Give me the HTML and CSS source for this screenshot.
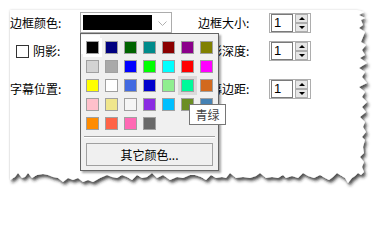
FILE: index.html
```html
<!DOCTYPE html>
<html lang="zh-CN">
<head>
<meta charset="utf-8">
<title>字幕设置</title>
<link rel="stylesheet" href="styles.css">
</head>
<body>
<div class="page">
  <svg class="paper" width="386" height="201" viewBox="0 0 386 201" aria-hidden="true">
    <defs>
      <filter id="torn" x="-10%" y="-10%" width="120%" height="130%">
        <feDropShadow dx="0" dy="0" stdDeviation="0.8" flood-color="#000" flood-opacity="0.18" result="s1"/>
        <feDropShadow dx="2" dy="3" stdDeviation="1.6" flood-color="#222" flood-opacity="0.75"/>
      </filter>
    </defs>
    <polygon filter="url(#torn)" fill="#fff" points="10,10 357,10 364,12 359,15 365,18 361,20 363,25 359,28 365,32 363,37 361,42 366,45 362,50 365,55 360,58 367,63 359,68 365,72 362,77 367,83 359,87 365,92 362,97 367,102 362,107 366,112 360,117 365,122 363,127 366,132 362,137 365,140 363,147 364,153 360,157 364,162 362,167 364,172 361,175 358,173 355,176 352,178 348,183 345,178 340,175 337,173 333,177 329,180 325,178 320,175 314,178 308,176 303,173 298,178 292,176 286,178 283,175 278,178 272,177 266,178 260,173 256,176 250,178 243,177 236,178 230,173 226,178 222,177 216,178 211,175 206,180 201,177 195,175 190,175 183,178 177,177 170,180 163,175 157,178 152,173 147,177 142,178 137,175 132,180 127,177 122,175 117,178 112,177 107,175 100,178 93,182 88,180 83,182 78,178 73,180 68,178 63,182 58,178 53,177 48,175 43,174 37,175 32,178 28,173 25,177 22,178 18,173 15,177 10,180"/>
  </svg>

  <div class="form">
    <div class="row">
      <div class="cell-left">
        <span class="label">边框颜色:</span>
        <div class="combo">
          <div class="combo-value"></div>
          <div class="combo-arrow">
            <svg width="9" height="5" viewBox="0 0 9 5"><polyline points="0.5,0.5 4.5,4.5 8.5,0.5" fill="none" stroke="#b0b0b0" stroke-width="1"/></svg>
          </div>
        </div>
      </div>
      <div class="cell-right">
        <span class="label label-right">边框大小:</span>
        <div class="spin">
          <div class="spin-input">1</div>
          <div class="spin-buttons">
            <div class="spin-btn"><span class="tri-up"></span></div>
            <div class="spin-btn"><span class="tri-down"></span></div>
          </div>
        </div>
      </div>
    </div>

    <div class="row row-2">
      <div class="cell-left">
        <span class="checkbox"></span>
        <span class="label">阴影:</span>
      </div>
      <div class="cell-right">
        <span class="label label-right">阴影深度:</span>
        <div class="spin">
          <div class="spin-input">1</div>
          <div class="spin-buttons">
            <div class="spin-btn"><span class="tri-up"></span></div>
            <div class="spin-btn"><span class="tri-down"></span></div>
          </div>
        </div>
      </div>
    </div>

    <div class="row row-3">
      <div class="cell-left">
        <span class="label">字幕位置:</span>
      </div>
      <div class="cell-right">
        <span class="label label-right">字幕边距:</span>
        <div class="spin">
          <div class="spin-input">1</div>
          <div class="spin-buttons">
            <div class="spin-btn"><span class="tri-up"></span></div>
            <div class="spin-btn"><span class="tri-down"></span></div>
          </div>
        </div>
      </div>
    </div>
  </div>

  <div class="popup">
    <div class="swatches">
      <div class="cell selected"><span class="sw" style="background:#000000"></span></div>
      <div class="cell"><span class="sw" style="background:#000080"></span></div>
      <div class="cell"><span class="sw" style="background:#006400"></span></div>
      <div class="cell"><span class="sw" style="background:#008b8b"></span></div>
      <div class="cell"><span class="sw" style="background:#8b0000"></span></div>
      <div class="cell"><span class="sw" style="background:#8b008b"></span></div>
      <div class="cell"><span class="sw" style="background:#808000"></span></div>

      <div class="cell"><span class="sw" style="background:#d3d3d3"></span></div>
      <div class="cell"><span class="sw" style="background:#a9a9a9"></span></div>
      <div class="cell"><span class="sw" style="background:#0000ff"></span></div>
      <div class="cell"><span class="sw" style="background:#00ff00"></span></div>
      <div class="cell"><span class="sw" style="background:#00ffff"></span></div>
      <div class="cell"><span class="sw" style="background:#ff0000"></span></div>
      <div class="cell"><span class="sw" style="background:#ff00ff"></span></div>

      <div class="cell"><span class="sw" style="background:#ffff00"></span></div>
      <div class="cell"><span class="sw" style="background:#ffffff"></span></div>
      <div class="cell"><span class="sw" style="background:#4169e1"></span></div>
      <div class="cell"><span class="sw" style="background:#0000cd"></span></div>
      <div class="cell"><span class="sw" style="background:#90ee90"></span></div>
      <div class="cell hover"><span class="sw" style="background:#00fa9a"></span></div>
      <div class="cell"><span class="sw" style="background:#d2691e"></span></div>

      <div class="cell"><span class="sw" style="background:#ffc0cb"></span></div>
      <div class="cell"><span class="sw" style="background:#f0e68c"></span></div>
      <div class="cell"><span class="sw" style="background:#f5f5f5"></span></div>
      <div class="cell"><span class="sw" style="background:#8a2be2"></span></div>
      <div class="cell"><span class="sw" style="background:#00bfff"></span></div>
      <div class="cell"><span class="sw" style="background:#6b8e23"></span></div>
      <div class="cell"><span class="sw" style="background:#4682b4"></span></div>

      <div class="cell"><span class="sw" style="background:#ff8c00"></span></div>
      <div class="cell"><span class="sw" style="background:#ff6347"></span></div>
      <div class="cell"><span class="sw" style="background:#ff69b4"></span></div>
      <div class="cell"><span class="sw" style="background:#696969"></span></div>
    </div>
    <div class="separator"></div>
    <div class="more-btn">其它颜色...</div>
  </div>

  <div class="tooltip">青绿</div>
</div>
</body>
</html>
```

FILE: styles.css
```css
html, body {
  margin: 0;
  padding: 0;
  background: #ffffff;
}

.page {
  position: relative;
  width: 386px;
  height: 201px;
  overflow: hidden;
  background: #ffffff;
  font-family: "Noto Sans CJK SC", "Microsoft YaHei", sans-serif;
  font-size: 12px;
  color: #000;
}

.paper {
  position: absolute;
  left: 0;
  top: 0;
}

.form {
  position: relative;
  padding: 12px 0 0 10px;
}

.row {
  display: flex;
  align-items: center;
  height: 22px;
}

.row-2 {
  margin-top: 6px;
}

.row-3 {
  margin-top: 16px;
}

.cell-left {
  display: flex;
  align-items: center;
  width: 188px;
}

.cell-right {
  display: flex;
  align-items: center;
}

.label {
  line-height: 14px;
  white-space: nowrap;
}

.cell-left > .label:first-child {
  width: 70px;
}

.label-right {
  width: 71px;
}

/* combo box */
.combo {
  box-sizing: border-box;
  width: 92px;
  height: 21px;
  margin-top: -1px;
  border: 1px solid #acacac;
  background: #fff;
  padding: 2px;
  display: flex;
}

.combo-value {
  width: 69px;
  height: 15px;
  background: #000;
}

.combo-arrow {
  flex: 1;
  display: flex;
  align-items: center;
  justify-content: center;
  padding-left: 3px;
  padding-top: 1px;
}

.combo-arrow svg {
  display: block;
}

/* checkbox */
.checkbox {
  box-sizing: border-box;
  width: 13px;
  height: 13px;
  border: 1px solid #333;
  background: #fff;
  margin-left: 6px;
  margin-right: 4px;
}

/* spinner */
.spin {
  box-sizing: border-box;
  width: 42px;
  height: 20px;
  border: 1px solid #adadad;
  background: #fff;
  display: flex;
  padding: 0 1px 0 1px;
}

.spin-input {
  box-sizing: border-box;
  width: 22px;
  height: 18px;
  border: 1px solid #7a7a7a;
  font-family: "Liberation Sans", "Noto Sans CJK SC", sans-serif;
  font-size: 13px;
  line-height: 16px;
  padding-left: 2px;
}

.spin-buttons {
  display: flex;
  flex-direction: column;
  margin-left: 2px;
  width: 13px;
}

.spin-btn {
  box-sizing: border-box;
  height: 9px;
  border: 1px solid #adadad;
  background: #e6e6e6;
  display: flex;
  align-items: center;
  justify-content: center;
}

.tri-up {
  width: 0;
  height: 0;
  border-left: 3px solid transparent;
  border-right: 3px solid transparent;
  border-bottom: 3px solid #000;
}

.tri-down {
  width: 0;
  height: 0;
  border-left: 3px solid transparent;
  border-right: 3px solid transparent;
  border-top: 3px solid #000;
}

/* colour popup */
.popup {
  position: absolute;
  left: 80px;
  top: 33px;
  box-sizing: border-box;
  width: 139px;
  border: 1px solid #646464;
  background: #f0f0f0;
  padding: 4px 0 4px 2px;
  box-shadow: 2px 2px 2px rgba(0, 0, 0, 0.35);
}

.swatches {
  display: grid;
  grid-template-columns: repeat(7, 19px);
  grid-auto-rows: 19px;
}

.cell {
  display: flex;
  padding: 3px 0 0 3px;
}

.cell.selected {
  background: #fff;
  box-shadow: -2px -3px 0 #fff;
}

.cell.hover {
  background: #dadada;
}

.sw {
  box-sizing: border-box;
  width: 13px;
  height: 13px;
  border: 1px solid #a0a0a0;
}

.separator {
  margin: 3px 3px 0 1px;
  border-top: 1px solid #a0a0a0;
  border-bottom: 1px solid #fff;
}

.more-btn {
  box-sizing: border-box;
  width: 127px;
  height: 23px;
  margin: 5px 0 0 3px;
  border: 1px solid #a0a0a0;
  background: #f0f0f0;
  text-align: center;
  line-height: 21px;
}

/* tooltip */
.tooltip {
  position: absolute;
  left: 189px;
  top: 104px;
  box-sizing: border-box;
  width: 37px;
  height: 21px;
  border: 1px solid #767676;
  background: #fff;
  color: #444;
  text-align: center;
  line-height: 19px;
}
```
